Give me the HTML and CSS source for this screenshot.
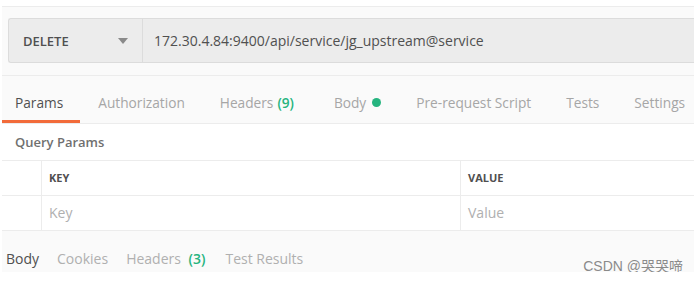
FILE: index.html
```html
<!DOCTYPE html>
<html>
<head>
    <title>Request - Postman</title>
    <link rel="stylesheet" href="styles.css">
</head>
<body>
    <div class="app">
        <div class="request-area">
            <div class="request-bar">
                <div class="method">
                    <span>DELETE</span>
                    <svg class="caret" width="10" height="6" viewBox="0 0 10 6"><path d="M0 0H10L5 6Z" fill="#8a8a8a"/></svg>
                </div>
                <div class="url">172.30.4.84:9400/api/service/jg_upstream@service</div>
            </div>
        </div>

        <div class="tabs">
            <div class="tab active">Params</div>
            <div class="tab">Authorization</div>
            <div class="tab">Headers <span class="count">(9)</span></div>
            <div class="tab">Body <span class="dot"></span></div>
            <div class="tab">Pre-request Script</div>
            <div class="tab">Tests</div>
            <div class="tab">Settings</div>
        </div>

        <div class="section-title">Query Params</div>

        <div class="table">
            <div class="row head">
                <div class="cell check"></div>
                <div class="cell key">KEY</div>
                <div class="cell value">VALUE</div>
            </div>
            <div class="row">
                <div class="cell check"></div>
                <div class="cell key placeholder">Key</div>
                <div class="cell value placeholder">Value</div>
            </div>
        </div>

        <div class="response-tabs">
            <div class="rtab active">Body</div>
            <div class="rtab">Cookies</div>
            <div class="rtab">Headers <span class="count">(3)</span></div>
            <div class="rtab">Test Results</div>
        </div>

        <div class="watermark">CSDN @哭哭啼</div>
    </div>
</body>
</html>
```

FILE: styles.css
```css
body {
    font-family: "Open Sans", sans-serif;
    margin: 0;
    padding-top: 6px;
    background: #fff;
}
.app {
    position: relative;
    width: 692px;
    margin-left: 2px;
    height: 266px;
    background: #fafafa;
    color: #505050;
    font-size: 14px;
}
.request-area {
    border-top: 1px solid #ececec;
    border-bottom: 1px solid #ececec;
    padding: 11px 0 12px 6px;
}
.request-bar {
    display: flex;
    height: 45px;
    background: #ececec;
    border: 1px solid #dcdcdc;
    border-right: none;
    border-radius: 3px 0 0 3px;
    box-sizing: border-box;
}
.method {
    width: 134px;
    display: flex;
    align-items: center;
    justify-content: space-between;
    padding: 0 14px 0 14px;
    box-sizing: border-box;
    border-right: 1px solid #dcdcdc;
    font-weight: 600;
    font-size: 13px;
    color: #505050;
}
.caret {
    margin-top: 1px;
}
.url {
    display: flex;
    align-items: center;
    padding-left: 11px;
    color: #505050;
}
.tabs {
    display: flex;
    height: 48px;
    border-bottom: 1px solid #ececec;
    box-sizing: border-box;
    font-size: 13.7px;
    overflow: hidden;
}
.tab {
    display: flex;
    align-items: center;
    flex-shrink: 0;
    white-space: nowrap;
    padding: 9px 17px 0 13px;
    margin-right: 5px;
    color: #a6a6a6;
    border-bottom: 3px solid transparent;
}
.tab.active {
    color: #505050;
    border-bottom-color: #f26b3a;
}
.count {
    color: #26b47f;
    font-weight: 600;
    margin-left: 4px;
}
.tab .count {
    margin-right: 5px;
}
.dot {
    display: inline-block;
    width: 9px;
    height: 9px;
    border-radius: 50%;
    background: #26b47f;
    margin-left: 6px;
}
.section-title {
    background: #fff;
    height: 36px;
    line-height: 37px;
    padding-left: 13px;
    font-weight: 600;
    font-size: 13px;
    color: #707070;
}
.table {
    background: #fff;
    border-top: 1px solid #ececec;
}
.row {
    display: flex;
    height: 34px;
    border-bottom: 1px solid #ececec;
}
.cell {
    display: flex;
    align-items: center;
    padding-left: 7px;
    padding-bottom: 1px;
    box-sizing: border-box;
}
.cell.check {
    width: 40px;
    padding: 0;
    border-right: 1px solid #ececec;
}
.cell.key {
    width: 419px;
    border-right: 1px solid #ececec;
}
.cell.value {
    flex: 1;
}
.head .cell {
    font-size: 11px;
    font-weight: 700;
    color: #505050;
}
.placeholder {
    color: #b0b0b0;
}
.response-tabs {
    display: flex;
    gap: 18px;
    padding: 18px 0 0 4px;
}
.rtab {
    color: #b0b0b0;
}
.rtab.active {
    color: #505050;
}
.rtab:last-child {
    margin-left: 2px;
}
.watermark {
    position: absolute;
    right: 11px;
    bottom: -3px;
    font-family: "Liberation Sans", "Noto Sans CJK SC", sans-serif;
    font-size: 14px;
    color: #8a8a8a;
}
```
